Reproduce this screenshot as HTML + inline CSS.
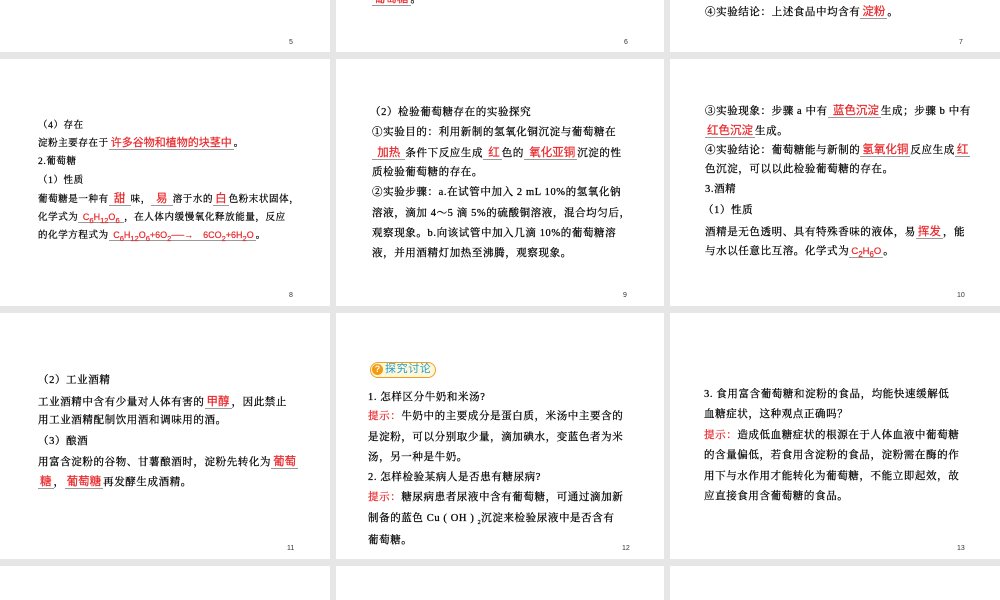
<!DOCTYPE html>
<html><head><meta charset="utf-8"><style>
body{margin:0;width:1000px;height:600px;background:#e6e6e6;position:relative;overflow:hidden;font-family:"Liberation Serif","Noto Serif CJK SC",serif;color:#000}
.s{position:absolute;background:#fff}
.l{position:absolute;white-space:nowrap;font-size:10.5px;line-height:14px;letter-spacing:0.6px;-webkit-text-stroke:0.25px #000}
.r{color:#e8262a;-webkit-text-stroke:0.2px #e8262a;font-family:"Liberation Sans","Noto Sans CJK SC",sans-serif;border-bottom:1px solid #999;padding:0 2px;font-size:11.5px;letter-spacing:0}
.n{position:absolute;font-family:"Liberation Sans",sans-serif;font-size:7px;color:#333}
.t{color:#e8262a;-webkit-text-stroke:0.25px #e8262a}
.k{font-size:10.5px;letter-spacing:0.6px}
</style></head><body>
<div class="s" style="left:0;top:0;width:330px;height:52px"></div>
<div class="s" style="left:336px;top:0;width:328px;height:52px"></div>
<div class="s" style="left:670px;top:0;width:330px;height:52px"></div>
<div class="s" style="left:0;top:59px;width:330px;height:247px"></div>
<div class="s" style="left:336px;top:59px;width:328px;height:247px"></div>
<div class="s" style="left:670px;top:59px;width:330px;height:247px"></div>
<div class="s" style="left:0;top:313px;width:330px;height:246px"></div>
<div class="s" style="left:336px;top:313px;width:328px;height:246px"></div>
<div class="s" style="left:670px;top:313px;width:330px;height:246px"></div>
<div class="s" style="left:0;top:566px;width:330px;height:34px"></div>
<div class="s" style="left:336px;top:566px;width:328px;height:34px"></div>
<div class="s" style="left:670px;top:566px;width:330px;height:34px"></div>

<div class="n" style="left:289px;top:39px">5</div>
<div class="n" style="left:624px;top:39px">6</div>
<div class="n" style="left:959px;top:39px">7</div>
<div class="n" style="left:289px;top:292px">8</div>
<div class="n" style="left:623px;top:292px">9</div>
<div class="n" style="left:957px;top:292px">10</div>
<div class="n" style="left:287px;top:545px">11</div>
<div class="n" style="left:622px;top:545px">12</div>
<div class="n" style="left:957px;top:545px">13</div>

<div class="l" style="left:372px;top:-8px"><span class="r">葡萄糖</span>。</div>
<div class="l" style="left:705px;top:5px">④实验结论：上述食品中均含有<span class="r">淀粉</span>。</div>

<!-- slide 8 -->
<div class="l" style="left:38px;top:119px;font-size:9.5px">（4）存在</div>
<div class="l" style="left:38px;top:136px;font-size:9.5px">淀粉主要存在于<span class="r" style="font-size:11px">许多谷物和植物的块茎中</span>。</div>
<div class="l" style="left:38px;top:155px;font-size:9.5px">2.葡萄糖</div>
<div class="l" style="left:38px;top:174px;font-size:9.5px">（1）性质</div>
<div class="l" style="left:38px;top:192px;font-size:9.5px">葡萄糖是一种有<span class="r">&nbsp;甜&nbsp;</span>味，<span class="r">&nbsp;易&nbsp;</span>溶于水的<span class="r">白</span>色粉末状固体，</div>
<div class="l" style="left:38px;top:210px;font-size:9.5px">化学式为<span class="r" style="font-size:9px">&nbsp;C<sub>6</sub>H<sub>12</sub>O<sub>6</sub>&nbsp;</span>，在人体内缓慢氧化释放能量，反应</div>
<div class="l" style="left:38px;top:228px;font-size:9.5px">的化学方程式为<span class="r" style="font-size:9px">&nbsp;C<sub>6</sub>H<sub>12</sub>O<sub>6</sub>+6O<sub>2</sub>──→&nbsp;&nbsp;&nbsp;&nbsp;6CO<sub>2</sub>+6H<sub>2</sub>O</span>。</div>

<!-- slide 9 -->
<div class="l k" style="left:370px;top:106px">（2）检验葡萄糖存在的实验探究</div>
<div class="l k" style="left:372px;top:126px">①实验目的：利用新制的氢氧化铜沉淀与葡萄糖在</div>
<div class="l k" style="left:372px;top:146px"><span class="r">&nbsp;加热&nbsp;</span>条件下反应生成<span class="r">&nbsp;红</span>色的<span class="r">&nbsp;氧化亚铜</span>沉淀的性</div>
<div class="l k" style="left:372px;top:166px">质检验葡萄糖的存在。</div>
<div class="l k" style="left:372px;top:186px">②实验步骤：a.在试管中加入 2 mL 10%的氢氧化钠</div>
<div class="l k" style="left:372px;top:207px">溶液，滴加 4～5 滴 5%的硫酸铜溶液，混合均匀后，</div>
<div class="l k" style="left:372px;top:227px">观察现象。b.向该试管中加入几滴 10%的葡萄糖溶</div>
<div class="l k" style="left:372px;top:247px">液，并用酒精灯加热至沸腾，观察现象。</div>

<!-- slide 10 -->
<div class="l k" style="left:705px;top:104px">③实验现象：步骤 a 中有<span class="r">&nbsp;蓝色沉淀</span>生成；步骤 b 中有</div>
<div class="l k" style="left:705px;top:124px"><span class="r">红色沉淀</span>生成。</div>
<div class="l k" style="left:705px;top:143px">④实验结论：葡萄糖能与新制的<span class="r">氢氧化铜</span>反应生成<span class="r">红</span></div>
<div class="l k" style="left:705px;top:163px">色沉淀，可以以此检验葡萄糖的存在。</div>
<div class="l k" style="left:705px;top:183px">3.酒精</div>
<div class="l k" style="left:703px;top:204px">（1）性质</div>
<div class="l k" style="left:705px;top:225px">酒精是无色透明、具有特殊香味的液体，易<span class="r">挥发</span>，能</div>
<div class="l k" style="left:705px;top:245px">与水以任意比互溶。化学式为<span class="r" style="font-size:9.5px">C<sub>2</sub>H<sub>6</sub>O</span>。</div>

<!-- slide 11 -->
<div class="l k" style="left:38px;top:374px">（2）工业酒精</div>
<div class="l k" style="left:38px;top:395px">工业酒精中含有少量对人体有害的<span class="r">甲醇</span>，因此禁止</div>
<div class="l k" style="left:38px;top:414px">用工业酒精配制饮用酒和调味用的酒。</div>
<div class="l k" style="left:38px;top:435px">（3）酿酒</div>
<div class="l k" style="left:38px;top:455px">用富含淀粉的谷物、甘薯酿酒时，淀粉先转化为<span class="r">葡萄</span></div>
<div class="l k" style="left:38px;top:475px"><span class="r">糖</span>，<span class="r">葡萄糖</span>再发酵生成酒精。</div>

<!-- slide 12 -->
<div style="position:absolute;left:370px;top:362px;width:64px;height:14px;border:1px solid #f0a020;border-radius:8px;background:#fff7d8"></div>
<div style="position:absolute;left:372px;top:364px;width:11px;height:11px;border-radius:50%;background:#f39a12;color:#fff;font:bold 9px/11px 'Liberation Sans',sans-serif;text-align:center">?</div>
<div class="l" style="left:385px;top:362px;color:#1f9fd8;-webkit-text-stroke:0;font-family:'Liberation Sans','Noto Sans CJK SC',sans-serif;font-size:11px">探究讨论</div>
<div class="l k" style="left:368px;top:391px">1. 怎样区分牛奶和米汤?</div>
<div class="l k" style="left:368px;top:410px"><span class="t">提示：</span>牛奶中的主要成分是蛋白质，米汤中主要含的</div>
<div class="l k" style="left:368px;top:431px">是淀粉，可以分别取少量，滴加碘水，变蓝色者为米</div>
<div class="l k" style="left:368px;top:451px">汤，另一种是牛奶。</div>
<div class="l k" style="left:368px;top:471px">2. 怎样检验某病人是否患有糖尿病?</div>
<div class="l k" style="left:368px;top:491px"><span class="t">提示：</span>糖尿病患者尿液中含有葡萄糖，可通过滴加新</div>
<div class="l k" style="left:368px;top:512px">制备的蓝色 Cu ( OH ) <sub style="font-size:6px">2</sub>沉淀来检验尿液中是否含有</div>
<div class="l k" style="left:368px;top:534px">葡萄糖。</div>

<!-- slide 13 -->
<div class="l k" style="left:704px;top:388px">3. 食用富含葡萄糖和淀粉的食品，均能快速缓解低</div>
<div class="l k" style="left:704px;top:408px">血糖症状，这种观点正确吗？</div>
<div class="l k" style="left:704px;top:429px"><span class="t">提示：</span>造成低血糖症状的根源在于人体血液中葡萄糖</div>
<div class="l k" style="left:704px;top:449px">的含量偏低，若食用含淀粉的食品，淀粉需在酶的作</div>
<div class="l k" style="left:704px;top:470px">用下与水作用才能转化为葡萄糖，不能立即起效，故</div>
<div class="l k" style="left:704px;top:490px">应直接食用含葡萄糖的食品。</div>
</body></html>
